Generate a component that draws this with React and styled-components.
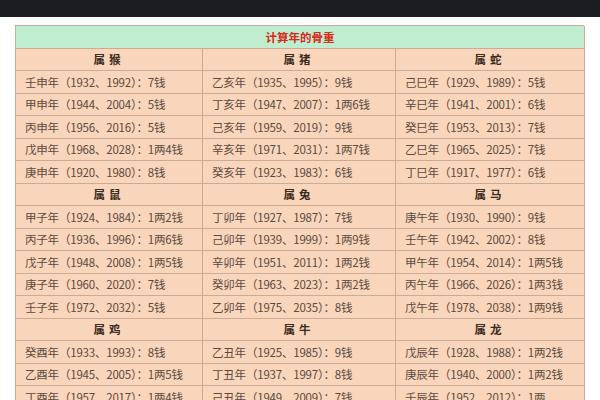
import React from 'react';
import styled, { createGlobalStyle } from 'styled-components';

const Global = createGlobalStyle`
  body { margin: 0; background: #fff; overflow: hidden; }
`;

const groups = [
  ['属猴', '属猪', '属蛇', [
    ['壬申年（1932、1992）：7钱', '乙亥年（1935、1995）：9钱', '己巳年（1929、1989）：5钱'],
    ['甲申年（1944、2004）：5钱', '丁亥年（1947、2007）：1两6钱', '辛巳年（1941、2001）：6钱'],
    ['丙申年（1956、2016）：5钱', '己亥年（1959、2019）：9钱', '癸巳年（1953、2013）：7钱'],
    ['戊申年（1968、2028）：1两4钱', '辛亥年（1971、2031）：1两7钱', '乙巳年（1965、2025）：7钱'],
    ['庚申年（1920、1980）：8钱', '癸亥年（1923、1983）：6钱', '丁巳年（1917、1977）：6钱'],
  ]],
  ['属鼠', '属兔', '属马', [
    ['甲子年（1924、1984）：1两2钱', '丁卯年（1927、1987）：7钱', '庚午年（1930、1990）：9钱'],
    ['丙子年（1936、1996）：1两6钱', '己卯年（1939、1999）：1两9钱', '壬午年（1942、2002）：8钱'],
    ['戊子年（1948、2008）：1两5钱', '辛卯年（1951、2011）：1两2钱', '甲午年（1954、2014）：1两5钱'],
    ['庚子年（1960、2020）：7钱', '癸卯年（1963、2023）：1两2钱', '丙午年（1966、2026）：1两3钱'],
    ['壬子年（1972、2032）：5钱', '乙卯年（1975、2035）：8钱', '戊午年（1978、2038）：1两9钱'],
  ]],
  ['属鸡', '属牛', '属龙', [
    ['癸酉年（1933、1993）：8钱', '乙丑年（1925、1985）：9钱', '戊辰年（1928、1988）：1两2钱'],
    ['乙酉年（1945、2005）：1两5钱', '丁丑年（1937、1997）：8钱', '庚辰年（1940、2000）：1两2钱'],
    ['丁酉年（1957、2017）：1两4钱', '己丑年（1949、2009）：7钱', '壬辰年（1952、2012）：1两'],
  ]],
];

const TopBar = styled.div`
  height: 17px;
  background: #1b1d20;
`;

const Page = styled.div`
  height: 383px;
  overflow: hidden;
  padding: 8px 16px 0 15px;
`;

const Table = styled.div`
  display: grid;
  grid-template-columns: 187px 193px 189px;
  grid-auto-rows: 22.5px;
  border-top: 1px solid #c9ab96;
  border-left: 1px solid #c9ab96;
  font-family: "Noto Sans CJK SC", "Liberation Sans", sans-serif;
`;

const Cell = styled.div`
  display: flex;
  align-items: center;
  justify-content: ${p => (p.$head ? 'center' : 'flex-start')};
  padding-left: ${p => (p.$head ? 0 : 9)}px;
  border-right: 1px solid #c9ab96;
  border-bottom: 1px solid #c9ab96;
  background: #f8d5bb;
  color: ${p => (p.$head ? '#3a2a20' : '#5b4a40')};
  font-size: 11.5px;
  font-weight: ${p => (p.$head ? 700 : 400)};
  letter-spacing: ${p => (p.$head ? '4px' : '-0.2px')};
  white-space: nowrap;
`;

const Title = styled(Cell)`
  grid-column: 1 / -1;
  justify-content: center;
  padding-left: 0;
  background: #c0ecd0;
  color: #d62a1a;
  font-weight: 700;
  letter-spacing: 0;
`;

export default function App() {
  return (
    <>
      <Global />
      <TopBar />
      <Page>
        <Table>
          <Title>计算年的骨重</Title>
          {groups.map(([a, b, c, rows]) => (
            <React.Fragment key={a}>
              <Cell $head>{a}</Cell>
              <Cell $head>{b}</Cell>
              <Cell $head>{c}</Cell>
              {rows.map(r => r.map(t => <Cell key={t}>{t}</Cell>))}
            </React.Fragment>
          ))}
        </Table>
      </Page>
    </>
  );
}
